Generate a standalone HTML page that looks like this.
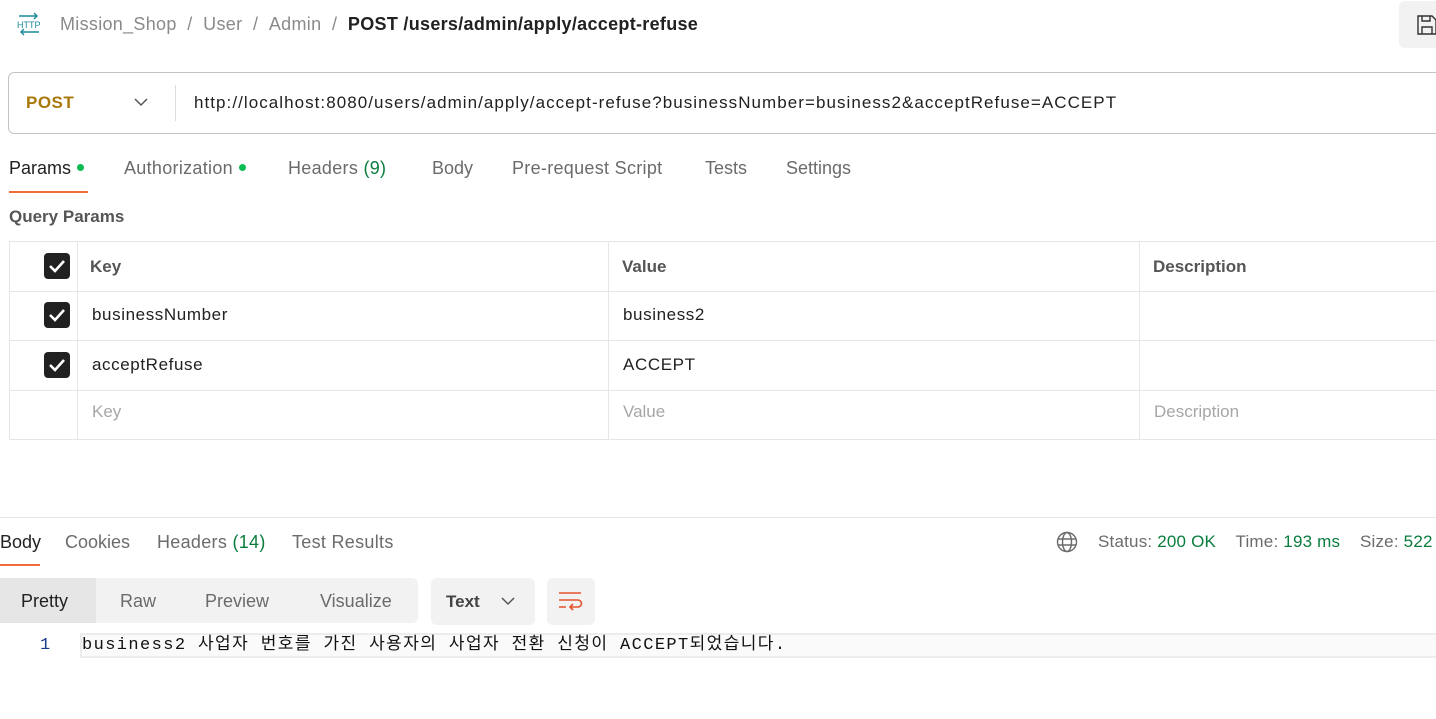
<!DOCTYPE html>
<html><head><meta charset="utf-8"><style>
*{margin:0;padding:0;box-sizing:border-box}
body{width:1436px;height:719px;overflow:hidden;background:#fff;font-family:"Liberation Sans","Noto Sans CJK KR",sans-serif;color:#212121;position:relative}
.a{position:absolute;white-space:nowrap}
.g{color:#6b6b6b}
.grn{color:#0a7d3e}
.dot{display:inline-block;width:7px;height:7px;border-radius:50%;background:#0cbb52;margin-left:6px;vertical-align:3px}
.cb{position:absolute;width:26px;height:26px;border-radius:4px;background:#212121}
.cb svg{position:absolute;left:4px;top:5px}
.hl{position:absolute;height:1px;background:#e6e6e6}
.vl{position:absolute;width:1px;background:#e6e6e6}
</style></head><body>
<svg class="a" style="left:16px;top:12px" width="26" height="24" viewBox="0 0 26 24"><path d="M3 4h18M18 1l3 3-3 3M23 20H5M8 17l-3 3 3 3" stroke="#1a8a9a" stroke-width="1.4" fill="none"/><text x="1" y="16" font-size="9" font-family="Liberation Sans" fill="#1a8a9a">HTTP</text></svg>
<div class="a" style="left:60px;top:14px;font-size:18px;color:#8a8a8a;letter-spacing:0.3px">Mission_Shop&nbsp; / &nbsp;User&nbsp; / &nbsp;Admin&nbsp; / &nbsp;<span style="color:#212121;font-weight:bold">POST /users/admin/apply/accept-refuse</span></div>
<div class="a" style="left:1399px;top:1px;width:50px;height:47px;background:#f2f2f2;border-radius:6px"></div>
<svg class="a" style="left:1417px;top:15px" width="19" height="20"><path d="M1 1h14l4 4v14H1z M5 1v5h8V1 M5 19v-7h10v7" stroke="#333" stroke-width="1.4" fill="none"/></svg>
<div class="a" style="left:8px;top:72px;width:1450px;height:62px;border:1px solid #c4c4c4;border-radius:6px"></div>
<div class="a" style="left:26px;top:93px;font-size:17px;font-weight:bold;color:#a9780b;letter-spacing:0.5px">POST</div>
<svg class="a" style="left:134px;top:98px" width="14" height="9"><path d="M1 1l6 6 6-6" stroke="#555" stroke-width="1.5" fill="none"/></svg>
<div class="vl" style="left:175px;top:85px;height:36px;background:#ddd"></div>
<div class="a" style="left:194px;top:93px;font-size:17px;letter-spacing:1.05px">http://localhost:8080/users/admin/apply/accept-refuse?businessNumber=business2&amp;acceptRefuse=ACCEPT</div>
<div class="a" style="left:9px;top:158px;font-size:18px">Params<span class="dot"></span></div>
<div class="a" style="left:9px;top:191px;width:79px;height:2px;background:#f26b3a"></div>
<div class="a g" style="left:124px;top:158px;font-size:18px;letter-spacing:0.3px">Authorization<span class="dot"></span></div>
<div class="a g" style="left:288px;top:158px;font-size:18px;letter-spacing:0.3px">Headers <span class="grn">(9)</span></div>
<div class="a g" style="left:432px;top:158px;font-size:18px">Body</div>
<div class="a g" style="left:512px;top:158px;font-size:18px;letter-spacing:0.3px">Pre-request Script</div>
<div class="a g" style="left:705px;top:158px;font-size:18px">Tests</div>
<div class="a g" style="left:786px;top:158px;font-size:18px">Settings</div>
<div class="a" style="left:9px;top:207px;font-size:17px;font-weight:bold;color:#555">Query Params</div>
<div class="hl" style="left:9px;top:241px;width:1430px"></div>
<div class="hl" style="left:9px;top:291px;width:1430px"></div>
<div class="hl" style="left:9px;top:340px;width:1430px"></div>
<div class="hl" style="left:9px;top:390px;width:1430px"></div>
<div class="hl" style="left:9px;top:439px;width:1430px"></div>
<div class="vl" style="left:9px;top:241px;height:198px"></div>
<div class="vl" style="left:77px;top:241px;height:198px"></div>
<div class="vl" style="left:608px;top:241px;height:198px"></div>
<div class="vl" style="left:1139px;top:241px;height:198px"></div>
<div class="cb" style="left:44px;top:253px"><svg width="18" height="16"><path d="M2 8l5 5 9-10" stroke="#fff" stroke-width="2.6" fill="none"/></svg></div>
<div class="cb" style="left:44px;top:302px"><svg width="18" height="16"><path d="M2 8l5 5 9-10" stroke="#fff" stroke-width="2.6" fill="none"/></svg></div>
<div class="cb" style="left:44px;top:352px"><svg width="18" height="16"><path d="M2 8l5 5 9-10" stroke="#fff" stroke-width="2.6" fill="none"/></svg></div>
<div class="a" style="left:90px;top:257px;font-size:17px;font-weight:bold;color:#555">Key</div>
<div class="a" style="left:622px;top:257px;font-size:17px;font-weight:bold;color:#555">Value</div>
<div class="a" style="left:1153px;top:257px;font-size:17px;font-weight:bold;color:#555">Description</div>
<div class="a" style="left:92px;top:305px;font-size:17px;letter-spacing:0.6px">businessNumber</div>
<div class="a" style="left:623px;top:305px;font-size:17px;letter-spacing:0.6px">business2</div>
<div class="a" style="left:92px;top:355px;font-size:17px;letter-spacing:0.6px">acceptRefuse</div>
<div class="a" style="left:623px;top:355px;font-size:17px;letter-spacing:0.6px">ACCEPT</div>
<div class="a" style="left:92px;top:402px;font-size:17px;color:#a6a6a6">Key</div>
<div class="a" style="left:623px;top:402px;font-size:17px;color:#a6a6a6">Value</div>
<div class="a" style="left:1154px;top:402px;font-size:17px;color:#a6a6a6">Description</div>
<div class="hl" style="left:0;top:517px;width:1436px"></div>
<div class="a" style="left:0;top:532px;font-size:18px">Body</div>
<div class="a" style="left:0;top:564px;width:40px;height:2px;background:#f26b3a"></div>
<div class="a g" style="left:65px;top:532px;font-size:18px">Cookies</div>
<div class="a g" style="left:157px;top:532px;font-size:18px;letter-spacing:0.3px">Headers <span class="grn">(14)</span></div>
<div class="a g" style="left:292px;top:532px;font-size:18px;letter-spacing:0.3px">Test Results</div>
<svg class="a" style="left:1056px;top:531px" width="22" height="22" viewBox="0 0 22 22"><g stroke="#6b6b6b" stroke-width="1.4" fill="none"><circle cx="11" cy="11" r="9.5"/><ellipse cx="11" cy="11" rx="4.5" ry="9.5"/><path d="M2 8h18M2 14h18"/></g></svg>
<div class="a g" style="left:1098px;top:532px;font-size:17px;letter-spacing:0.2px">Status: <span class="grn">200 OK</span>&nbsp;&nbsp;&nbsp; Time: <span class="grn">193 ms</span>&nbsp;&nbsp;&nbsp; Size: <span class="grn">522</span></div>
<div class="a" style="left:0;top:578px;width:418px;height:45px;background:#f2f2f2;border-radius:0 6px 6px 0"></div>
<div class="a" style="left:0;top:578px;width:96px;height:45px;background:#e6e6e6"></div>
<div class="a" style="left:21px;top:591px;font-size:18px">Pretty</div>
<div class="a g" style="left:120px;top:591px;font-size:18px">Raw</div>
<div class="a g" style="left:205px;top:591px;font-size:18px">Preview</div>
<div class="a g" style="left:320px;top:591px;font-size:18px">Visualize</div>
<div class="a" style="left:431px;top:578px;width:104px;height:47px;background:#f2f2f2;border-radius:6px"></div>
<div class="a" style="left:446px;top:592px;font-size:17px;font-weight:bold;color:#444">Text</div>
<svg class="a" style="left:501px;top:597px" width="14" height="9"><path d="M1 1l6 6 6-6" stroke="#555" stroke-width="1.5" fill="none"/></svg>
<div class="a" style="left:547px;top:578px;width:48px;height:47px;background:#f2f2f2;border-radius:6px"></div>
<svg class="a" style="left:558px;top:591px" width="26" height="22"><g stroke="#e5532c" stroke-width="1.6" fill="none"><path d="M1 2h22M1 9h19a3 3 0 0 1 0 7h-7M15 13l-3 3 3 3M1 16h7"/></g></svg>
<div class="a" style="left:80px;top:633px;width:1360px;height:25px;background:#fafafa;border:2px solid #ececec;border-right:none"></div>
<div class="a" style="left:40px;top:636px;font-size:17px;font-family:'Liberation Mono','Noto Sans CJK KR',monospace;color:#1a3a8a">1</div>
<div class="a" style="left:82px;top:635px;font-size:17px;line-height:22px;letter-spacing:1.4px;font-family:'Liberation Mono','Noto Sans CJK KR',monospace;color:#111">business2 사업자 번호를 가진 사용자의 사업자 전환 신청이 ACCEPT되었습니다.</div>
</body></html>
